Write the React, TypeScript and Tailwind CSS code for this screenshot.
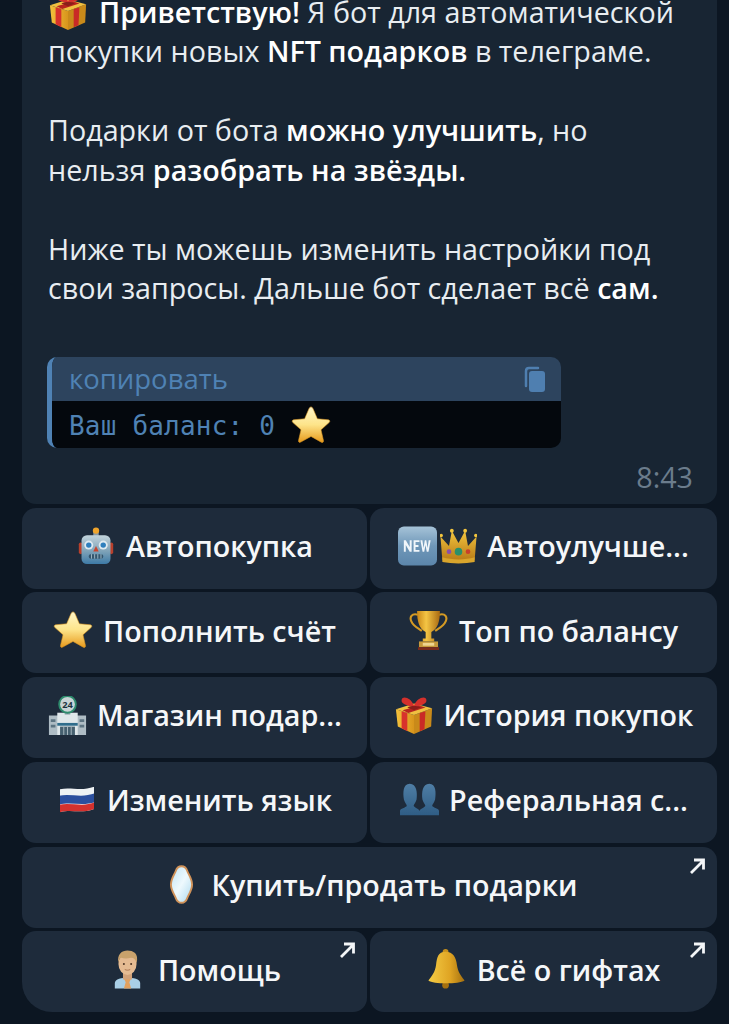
import type { ReactNode } from "react";

const sans = { fontFamily: '"Open Sans", sans-serif' };

function Star({ id, size = 40 }: { id: string; size?: number }) {
  return (
    <svg width={size} height={size} viewBox="0 0 42 42" className="shrink-0">
      <defs>
        <linearGradient id={id} x1="0" y1="0" x2="0" y2="1">
          <stop offset="0" stopColor="#fff6c8" />
          <stop offset="0.5" stopColor="#fde48a" />
          <stop offset="1" stopColor="#e79a1c" />
        </linearGradient>
      </defs>
      <path
        d="M21 2c1 0 1.700.8 2.200 2l4.500 10.500 11.300 1c1.800.2 2.300 1.700 1 3l-8.500 7.600 2.600 11.200c.4 1.800-.9 2.600-2.400 1.700L21 33l-10.700 5.900c-1.500.9-2.800.1-2.400-1.700l2.600-11.200L2 18.500c-1.300-1.300-.8-2.800 1-3l11.300-1L18.800 4c.5-1.200 1.200-2 2.200-2z"
        fill={`url(#${id})`}
        stroke="#d8941f"
        strokeWidth="0.6"
      />
    </svg>
  );
}

function Gift({ id }: { id: string }) {
  return (
    <svg width="40" height="40" viewBox="0 0 42 42" className="shrink-0">
      <defs>
        <linearGradient id={id} x1="0" y1="0" x2="1" y2="0">
          <stop offset="0" stopColor="#f4c23c" />
          <stop offset="1" stopColor="#d8951c" />
        </linearGradient>
      </defs>
      <path d="M2 15l19 6v20L4 33z" fill={`url(#${id})`} />
      <path d="M21 21l19-7-1 19-18 8z" fill="#c98a1a" />
      <path d="M2 15l19-6 19 5-19 7z" fill="#f0c040" />
      <path d="M8 17l6 2v19l-6-3z" fill="#d8322c" />
      <path d="M27 19l6-2-1 19-5 2z" fill="#c92a26" />
      <path d="M9 16l18-5 6 2-18 6z" fill="#b8241f" />
      <path d="M21 11c-3-8-12-11-13-6-1 4 6 7 13 7 7 0 14-3 13-7-1-5-10-2-13 6z" fill="#d4302c" />
      <path d="M14 13c4-2 10-2 14 0l-7 3z" fill="#8c1d1a" />
    </svg>
  );
}

function Robot() {
  return (
    <svg width="36" height="38" viewBox="0 0 38 42" className="shrink-0">
      <defs>
        <linearGradient id="robotBody" x1="0" y1="0" x2="0" y2="1">
          <stop offset="0" stopColor="#c3d4dc" />
          <stop offset="0.55" stopColor="#7fa3b8" />
          <stop offset="1" stopColor="#3d7aa6" />
        </linearGradient>
      </defs>
      <rect x="16" y="5" width="6" height="6" fill="#8c9aa3" />
      <circle cx="19" cy="4" r="3.500" fill="#f0a52c" />
      <rect x="0" y="17" width="4" height="13" rx="2" fill="#b8402c" />
      <rect x="34" y="17" width="4" height="13" rx="2" fill="#b8402c" />
      <rect x="3" y="9" width="32" height="32" rx="6" fill="url(#robotBody)" />
      <circle cx="11" cy="20" r="5" fill="#dfeaf0" />
      <circle cx="27" cy="20" r="5" fill="#dfeaf0" />
      <circle cx="11" cy="20" r="3" fill="#2f7fbd" />
      <circle cx="27" cy="20" r="3" fill="#2f7fbd" />
      <path d="M19 21l3 6h-6z" fill="#c8452f" />
      <rect x="11" y="30" width="16" height="5" rx="2" fill="#33566e" />
      <path d="M14 30v5M17.500 30v5M21 30v5M24.500 30v5" stroke="#a9c0cd" strokeWidth="1" />
    </svg>
  );
}

function NewBadge() {
  return (
    <svg width="39" height="40" viewBox="0 0 40 40" className="shrink-0">
      <defs>
        <linearGradient id="newBadge" x1="0" y1="0" x2="0" y2="1">
          <stop offset="0" stopColor="#a6c3d8" />
          <stop offset="0.5" stopColor="#6f97b8" />
          <stop offset="1" stopColor="#5c86ab" />
        </linearGradient>
      </defs>
      <rect x="0" y="0" width="40" height="40" rx="6" fill="url(#newBadge)" />
      <path d="M6 26V14h2l4 7v-7h2v12h-2l-4-7v7zM16 26V14h6v2h-4v3h3v2h-3v3h4v2zM23 14h2l1.200 8 1.300-8h1.500l1.300 8 1.200-8h2l-2.200 12h-1.800l-1.300-7-1.300 7h-1.700z" fill="#f1f6fa" />
    </svg>
  );
}

function Crown() {
  return (
    <svg width="37" height="38" viewBox="0 0 38 40" className="shrink-0">
      <defs>
        <linearGradient id="crownFill" x1="0" y1="0" x2="0" y2="1">
          <stop offset="0" stopColor="#f2c53e" />
          <stop offset="1" stopColor="#b97c18" />
        </linearGradient>
      </defs>
      <path d="M2 36L0 11l9 10 3-16 7 13 7-13 3 16 9-10-2 25z" fill="url(#crownFill)" />
      <path d="M2 33c10 3 24 3 34 0v5c-10 2-24 2-34 0z" fill="#d9a52c" />
      <circle cx="19" cy="27" r="4" fill="#2b8f6a" />
      <circle cx="9" cy="27" r="2.500" fill="#8b4fa8" />
      <circle cx="29" cy="27" r="2.500" fill="#c8402c" />
      <circle cx="0.800" cy="10" r="1.800" fill="#f2c53e" />
      <circle cx="37.200" cy="10" r="1.800" fill="#f2c53e" />
      <circle cx="12" cy="5" r="2" fill="#f2c53e" />
      <circle cx="26" cy="5" r="2" fill="#f2c53e" />
    </svg>
  );
}

function Trophy() {
  return (
    <svg width="39" height="40" viewBox="0 0 40 42" className="shrink-0">
      <defs>
        <linearGradient id="trophyFill" x1="0" y1="0" x2="1" y2="0">
          <stop offset="0" stopColor="#c98718" />
          <stop offset="0.4" stopColor="#f4c544" />
          <stop offset="1" stopColor="#a96a12" />
        </linearGradient>
      </defs>
      <path d="M9 5C2 3 0 8 2 12c2 5 7 7 11 10M31 5c7-2 9 3 7 7-2 5-7 7-11 10" fill="none" stroke="#d49a24" strokeWidth="2.200" />
      <path d="M8 1h24c0 10-2 19-9 22v7h3v3H14v-3h3v-7C10 20 8 11 8 1z" fill="url(#trophyFill)" />
      <rect x="10" y="33" width="20" height="6" fill="#c69a3c" />
      <rect x="14" y="34.500" width="12" height="3" fill="#eed590" />
      <rect x="9" y="39" width="22" height="3" fill="#7a2a1c" />
    </svg>
  );
}

function Store() {
  return (
    <svg width="39" height="39" viewBox="0 0 40 42" className="shrink-0">
      <rect x="0" y="21" width="40" height="21" fill="#aebcc4" />
      <rect x="9" y="18" width="22" height="24" fill="#dfe7ea" />
      <path d="M2 25h5v3H2zM2 31h5v3H2zM33 25h5v3h-5zM33 31h5v3h-5z" fill="#5d7482" />
      <rect x="9" y="29" width="22" height="3" fill="#2f6d8c" />
      <rect x="12" y="33" width="16" height="9" fill="#46606f" />
      <path d="M16 33v9M20 33v9M24 33v9" stroke="#aebcc4" strokeWidth="1" />
      <rect x="17" y="15" width="6" height="5" fill="#8fa1aa" />
      <circle cx="20" cy="9" r="9" fill="#c9d4d6" stroke="#2e8b6d" strokeWidth="2" />
      <text x="20" y="12.500" textAnchor="middle" fontSize="10" fontWeight="700" fill="#1d3440" fontFamily="Open Sans, sans-serif">24</text>
    </svg>
  );
}

function Flag() {
  return (
    <svg width="36" height="27" viewBox="0 2 38 33" preserveAspectRatio="none" className="shrink-0">
      <defs>
        <clipPath id="flagClip">
          <path d="M1 6c12-3 22 3 36-3v27c-14 6-24 0-36 4z" />
        </clipPath>
      </defs>
      <g clipPath="url(#flagClip)">
        <rect width="38" height="36" fill="#eef2f4" />
        <path d="M0 14c12-3 24 3 38-3v11c-14 5-26-1-38 3z" fill="#2b4f9e" />
        <path d="M0 25c12-3 26 3 38-3v14H0z" fill="#d3312e" />
      </g>
    </svg>
  );
}

function Busts() {
  return (
    <svg width="39" height="33" viewBox="0 2 40 40" preserveAspectRatio="none" className="shrink-0">
      <defs>
        <linearGradient id="bustFill" x1="0" y1="0" x2="0" y2="1">
          <stop offset="0" stopColor="#4f7ea5" />
          <stop offset="1" stopColor="#2f5d85" />
        </linearGradient>
      </defs>
      <path d="M0 41v-5c0-3 6-4 7-6 0-2-2-4-3-8C3 14 3 3 10 3s8 11 7 19c-1 4-3 6-3 8 1 2 5 3 6 6 1-3 5-4 6-6 0-2-2-4-3-8-1-8 0-19 7-19s7 11 6 19c-1 4-3 6-3 8 1 2 7 3 7 6v5z" fill="url(#bustFill)" />
    </svg>
  );
}

function Mirror() {
  return (
    <svg width="25" height="39" viewBox="0 0 26 40" className="shrink-0">
      <defs>
        <linearGradient id="mirrorGlass" x1="0" y1="0" x2="1" y2="1">
          <stop offset="0" stopColor="#bfe4f5" />
          <stop offset="0.5" stopColor="#eef9fd" />
          <stop offset="1" stopColor="#a9d8ee" />
        </linearGradient>
      </defs>
      <path d="M13 1c3 0 5 2 6 5 1 3 5 8 5 14s-4 11-5 14c-1 3-3 5-6 5s-5-2-6-5c-1-3-5-8-5-14S6 9 7 6c1-3 3-5 6-5z" fill="url(#mirrorGlass)" stroke="#d1935a" strokeWidth="2" />
    </svg>
  );
}

function Man() {
  return (
    <svg width="29" height="39" viewBox="0 0 32 42" className="shrink-0">
      <path d="M2 42v-6c0-5 8-6 14-6s14 1 14 6v6z" fill="#a9cfe6" />
      <path d="M16 31l-4 0 2 4-2 7h8l-2-7 2-4z" fill="#e2a15f" />
      <rect x="11" y="22" width="10" height="10" fill="#d2a279" />
      <ellipse cx="16" cy="15" rx="10" ry="12" fill="#e5bb92" />
      <path d="M6 14C4 4 10 0 16 0s13 3 10 14c-1-4-3-6-6-6-4 1-8 1-11 0-2 1-3 3-3 6z" fill="#c9a26c" />
      <circle cx="12" cy="15" r="1.100" fill="#4a3222" />
      <circle cx="20" cy="15" r="1.100" fill="#4a3222" />
      <path d="M13 21c2 1 4 1 6 0" stroke="#a8714c" strokeWidth="1" fill="none" />
    </svg>
  );
}

function Bell() {
  return (
    <svg width="39" height="40" viewBox="0 0 40 42" className="shrink-0">
      <defs>
        <linearGradient id="bellFill" x1="0" y1="0" x2="1" y2="0">
          <stop offset="0" stopColor="#f4cc45" />
          <stop offset="0.6" stopColor="#dfa423" />
          <stop offset="1" stopColor="#a5700f" />
        </linearGradient>
      </defs>
      <circle cx="19" cy="38" r="3.500" fill="#a5700f" />
      <circle cx="19" cy="3" r="3" fill="#c68f1c" />
      <path d="M19 3c8 0 11 6 12 14 1 7 4 11 8 16-6 4-33 4-38 0 4-5 7-9 8-16C10 9 11 3 19 3z" fill="url(#bellFill)" />
    </svg>
  );
}

function Arrow() {
  return (
    <svg viewBox="0 0 16 16" className="absolute top-[11px] right-[12px] h-4 w-4" fill="none" stroke="#f4f6f8" strokeWidth="2.800">
      <path d="M2 15L14 3M5 2h9.500v9.500" />
    </svg>
  );
}

function KeyButton({ icon, label, link, className = "" }: { icon: ReactNode; label: string; link?: boolean; className?: string }) {
  return (
    <button className={`relative flex h-[81px] min-w-0 items-center justify-center gap-[10px] whitespace-nowrap rounded-[14px] bg-[#1e2b3b] pb-[5px] text-[28.7px] font-semibold text-[#f5f7f9] ${className}`} style={sans}>
      <span className="flex min-w-[40px] shrink-0 items-center justify-center">{icon}</span>
      <span>{label}</span>
      {link && <Arrow />}
    </button>
  );
}

export default function App() {
  return (
    <div className="h-[1024px] w-[729px] overflow-hidden bg-[#0c1622] pl-[22px] pr-[12px]">
      <div className="-mt-[20px] rounded-[14px] bg-[#182533] pl-[26px] pr-[24px] pt-[11.500px] pb-[7px] text-[28.7px] leading-[39.5px] text-[#e8edf1]" style={sans}>
        <p className="flex h-[39.5px] items-center gap-[11px] whitespace-nowrap">
          <Gift id="giftTop" />
          <span><b className="font-semibold text-white">Приветствую!</b> Я бот для автоматической</span>
        </p>
        <p>покупки новых <b className="font-semibold text-white">NFT подарков</b> в телеграме.</p>
        <p className="mt-[39.5px]">Подарки от бота <b className="font-semibold text-white">можно улучшить</b>, но</p>
        <p>нельзя <b className="font-semibold text-white">разобрать на звёзды.</b></p>
        <p className="mt-[39.5px]">Ниже ты можешь изменить настройки под</p>
        <p>свои запросы. Дальше бот сделает всё <b className="font-semibold text-white">сам.</b></p>

        <div className="mt-[49.500px] -ml-[1px] w-[514px] overflow-hidden rounded-[10px] border-l-[5px] border-[#4f82b4]">
          <div className="flex h-[44px] items-center justify-between bg-[#2d445e] pl-[17px] pr-[14px] text-[27.5px] text-[#4f82b4]">
            <span>копировать</span>
            <svg width="24" height="26" viewBox="0 0 24 26" fill="#4f7fb0">
              <rect x="6" y="5" width="16" height="21" rx="3" />
              <path d="M3 20V5c0-2 1-3 3-3h9" fill="none" stroke="#4f7fb0" strokeWidth="2.500" strokeLinecap="round" />
            </svg>
          </div>
          <div className="flex h-[47px] items-center gap-[16px] bg-[#04080d] pl-[17px] text-[#4f82b4]">
            <span className="mt-[5px] text-[26px] tracking-[0.2px]" style={{ fontFamily: '"DejaVu Sans Mono", monospace' }}>Ваш баланс: 0</span>
            <Star id="starCode" />
          </div>
        </div>

        <div className="mt-[9px] text-right text-[28.7px] text-[#6b7c8c]">8:43</div>
      </div>

      <div className="mt-[4px] grid grid-cols-[345px_347px] gap-x-[3px] gap-y-[3.750px]">
        <KeyButton icon={<Robot />} label="Автопокупка" />
        <KeyButton icon={<span className="flex gap-[3px]"><NewBadge /><Crown /></span>} label="Автоулучше..." />
        <KeyButton icon={<Star id="starTopUp" />} label="Пополнить счёт" />
        <KeyButton icon={<Trophy />} label="Топ по балансу" />
        <KeyButton icon={<Store />} label="Магазин подар..." />
        <KeyButton icon={<Gift id="giftHistory" />} label="История покупок" />
        <KeyButton icon={<Flag />} label="Изменить язык" />
        <KeyButton icon={<Busts />} label="Реферальная с..." />
        <KeyButton icon={<Mirror />} label="Купить/продать подарки" link className="col-span-2" />
        <KeyButton icon={<Man />} label="Помощь" link className="rounded-bl-[30px]" />
        <KeyButton icon={<Bell />} label="Всё о гифтах" link className="rounded-br-[30px]" />
      </div>
    </div>
  );
}
